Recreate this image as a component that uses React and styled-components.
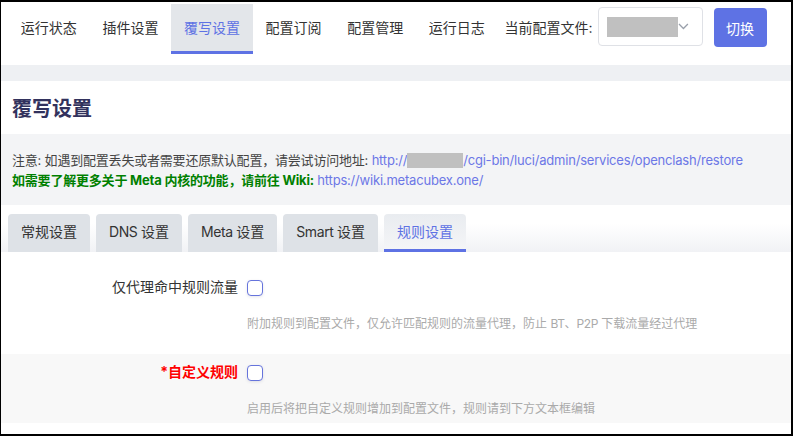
import React from "react";
import styled, { createGlobalStyle } from "styled-components";

const GlobalStyle = createGlobalStyle`
  body {
    margin: 0;
    font-family: Inter, "Noto Sans CJK SC", sans-serif;
    color: #333;
  }
`;

function Chevron() {
  return (
    <svg width="11" height="7" viewBox="0 0 11 7">
      <polyline
        points="1,1 5.5,5.5 10,1"
        fill="none"
        stroke="#9aa0ab"
        strokeWidth="1.3"
      />
    </svg>
  );
}

function App() {
  return (
    <Frame>
      <GlobalStyle />
      <NavBar>
        <NavTab>运行状态</NavTab>
        <NavTab>插件设置</NavTab>
        <NavTab $active>覆写设置</NavTab>
        <NavTab>配置订阅</NavTab>
        <NavTab>配置管理</NavTab>
        <NavTab>运行日志</NavTab>
        <ProfileLabel>当前配置文件:</ProfileLabel>
        <Select>
          <Redacted $w={72} $h={20} />
          <Chevron />
        </Select>
        <SwitchButton>切换</SwitchButton>
      </NavBar>

      <TitleCard>
        <h2>覆写设置</h2>
      </TitleCard>

      <Notice>
        <div>
          注意: 如遇到配置丢失或者需要还原默认配置，请尝试访问地址:{" "}
          <Link>
            http://
            <Redacted $w={56} $h={15} />
            /cgi-bin/luci/admin/services/openclash/restore
          </Link>
        </div>
        <div>
          <Strong>如需要了解更多关于 Meta 内核的功能，请前往 Wiki:</Strong>{" "}
          <Link>https://wiki.metacubex.one/</Link>
        </div>
      </Notice>

      <SubTabs>
        <SubTab>常规设置</SubTab>
        <SubTab>
          <En>DNS </En>设置
        </SubTab>
        <SubTab>
          <En>Meta </En>设置
        </SubTab>
        <SubTab>
          <En>Smart </En>设置
        </SubTab>
        <SubTab $active>规则设置</SubTab>
      </SubTabs>

      <Form>
        <Row $pb={22}>
          <Label>仅代理命中规则流量</Label>
          <Field>
            <Checkbox />
          </Field>
          <Desc>
            附加规则到配置文件，仅允许匹配规则的流量代理，防止 <En>BT</En>、<En>P2P</En> 下载流量经过代理
          </Desc>
        </Row>
        <Row $alt $pb={6}>
          <Label $required>*自定义规则</Label>
          <Field>
            <Checkbox />
          </Field>
          <Desc>启用后将把自定义规则增加到配置文件，规则请到下方文本框编辑</Desc>
        </Row>
      </Form>
    </Frame>
  );
}

const Frame = styled.div`
  width: 793px;
  height: 436px;
  box-sizing: border-box;
  border: solid #000;
  border-width: 2px 2px 2px 1px;
  background: #fff;
  overflow: hidden;
`;

const NavBar = styled.div`
  display: flex;
  align-items: flex-start;
  padding: 2px 0 0 7px;
  background: #fff;
  border-bottom: 16px solid #eef0f3;
  height: 61px;
`;

const NavTab = styled.div`
  height: 47px;
  line-height: 47px;
  padding: 0 12.8px;
  font-size: 14px;
  color: ${(p) => (p.$active ? "#5e72e4" : "#333")};
  background: ${(p) => (p.$active ? "#e3e6ea" : "transparent")};
  border-bottom: 3px solid ${(p) => (p.$active ? "#5e72e4" : "transparent")};
  white-space: nowrap;
`;

const ProfileLabel = styled.div`
  margin-left: 7px;
  line-height: 47px;
  font-size: 14px;
  color: #333;
  white-space: nowrap;
`;

const Select = styled.div`
  margin: 3px 0 0 5px;
  width: 105px;
  height: 39px;
  box-sizing: border-box;
  border: 1px solid #dfe1e6;
  border-radius: 4px;
  display: flex;
  align-items: center;
  justify-content: space-between;
  padding: 0 13px 0 8px;
`;

const Redacted = styled.span`
  display: inline-block;
  width: ${(p) => p.$w}px;
  height: ${(p) => p.$h}px;
  background: #c0c0c0;
  vertical-align: -3px;
`;

const SwitchButton = styled.button`
  margin: 4px 0 0 11px;
  width: 53px;
  height: 39px;
  border: none;
  border-radius: 4px;
  background: #5e72e4;
  color: #fff;
  font-family: inherit;
  font-size: 14px;
  padding: 0;
`;

const TitleCard = styled.div`
  height: 53px;
  padding: 0 11px;
  background: #fff;
  display: flex;
  align-items: center;

  h2 {
    margin: 0;
    font-size: 20px;
    font-weight: 700;
    color: #32325d;
  }
`;

const Notice = styled.div`
  background: #f3f4f6;
  padding: 16px 11px 15px;
  font-size: 13px;
  line-height: 20px;
  letter-spacing: -0.2px;
  color: #444;
  white-space: nowrap;
`;

const Link = styled.span`
  color: #6c77e6;
`;

const Strong = styled.span`
  color: #008000;
  font-weight: 700;
`;

const SubTabs = styled.div`
  display: flex;
  gap: 6px;
  padding: 9px 0 0 7px;
  background: linear-gradient(#fff 40%, #f1f2f5);
`;

const SubTab = styled.div`
  height: 35px;
  line-height: 36px;
  padding: 0 13px;
  font-size: 14px;
  border-radius: 4px 4px 0 0;
  color: ${(p) => (p.$active ? "#5e72e4" : "#333")};
  background: ${(p) =>
    p.$active ? "linear-gradient(#e9ecf0, #f4f5f7)" : "#dee2e7"};
  border-bottom: 3px solid ${(p) => (p.$active ? "#5e72e4" : "transparent")};
  white-space: nowrap;
`;

const En = styled.span`
  letter-spacing: -0.4px;
`;

const Form = styled.div`
  padding-top: 17px;
  background: #fff;
`;

const Row = styled.div`
  display: grid;
  grid-template-columns: 237px 1fr;
  column-gap: 9px;
  row-gap: 19px;
  padding: 8px 0 ${(p) => p.$pb}px;
  background: ${(p) => (p.$alt ? "#f8f8f8" : "#fff")};
`;

const Label = styled.div`
  text-align: right;
  font-size: 14px;
  line-height: 20px;
  color: ${(p) => (p.$required ? "#ff0000" : "#333")};
  font-weight: ${(p) => (p.$required ? 700 : 400)};
`;

const Field = styled.div`
  display: flex;
  align-items: center;
  height: 20px;
`;

const Checkbox = styled.span`
  display: block;
  width: 16px;
  height: 16px;
  margin-top: 2px;
  box-sizing: border-box;
  border: 1.5px solid #6674dc;
  border-radius: 4px;
  background: #fff;
  box-shadow: 0 1px 3px rgba(50, 50, 93, 0.12);
`;

const Desc = styled.div`
  grid-column: 2;
  font-size: 12px;
  line-height: 16px;
  color: #aaa;
  white-space: nowrap;
`;

export default App;
